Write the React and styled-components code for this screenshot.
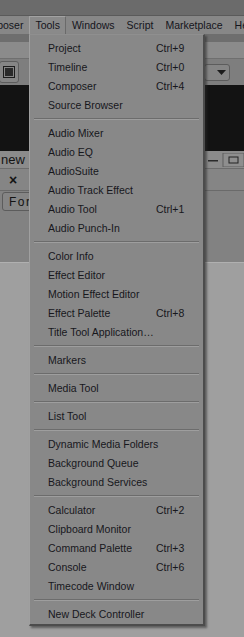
import React from 'react'
import styled, { createGlobalStyle } from 'styled-components'

const Global = createGlobalStyle`
  html, body { margin: 0; padding: 0; }
  body {
    width: 244px;
    height: 637px;
    overflow: hidden;
    background: #9f9f9f;
    font-family: "Liberation Sans", Arial, sans-serif;
  }
`

const Screen = styled.div`
  position: relative;
  width: 244px;
  height: 637px;
  overflow: hidden;
  display: flex;
  flex-direction: column;
  background: #9f9f9f;
`

const Band = styled.div`
  height: ${p => p.h}px;
  background: ${p => p.bg};
  border-bottom: ${p => (p.line ? `1px solid ${p.line}` : 'none')};
  box-sizing: border-box;
  flex-shrink: 0;
  display: flex;
  align-items: center;
  justify-content: space-between;
`

const MenuBar = styled.div`
  height: 18px;
  background: #878787;
  display: flex;
  align-items: stretch;
  margin-left: -31px;
  flex-shrink: 0;
`

const BarItem = styled.div`
  padding: 0 5px;
  font-size: 10.5px;
  line-height: 17px;
  color: #15151c;
  white-space: nowrap;
  box-sizing: border-box;
  border: 1px solid ${p => (p.open ? '#6a6a6a' : 'transparent')};
  border-top-color: ${p => (p.open ? '#a2a2a2' : 'transparent')};
  border-left-color: ${p => (p.open ? '#a2a2a2' : 'transparent')};
  border-bottom: none;
  background: ${p => (p.open ? '#8a8a8a' : 'transparent')};
`

const ToolButton = styled.div`
  width: ${p => p.w}px;
  height: ${p => p.h}px;
  margin: 0 ${p => p.mr || 0}px 0 ${p => p.ml || 0}px;
  box-sizing: border-box;
  border: 1px solid #5c5c5c;
  border-radius: 3px;
  background: #858585;
  display: flex;
  align-items: center;
  justify-content: center;
  color: #1c1c1c;
`

const Label = styled.span`
  font-size: ${p => p.size || 12}px;
  color: #141414;
  letter-spacing: ${p => p.ls || 0}px;
`

const Menu = styled.div`
  position: absolute;
  left: 29px;
  top: 34px;
  width: 176px;
  box-sizing: border-box;
  padding: 3px 0 1px;
  background: #888888;
  border-left: 1px solid #a0a0a0;
  border-top: 1px solid #8f8f8f;
  border-right: 2px solid #4c4c4c;
  border-bottom: 2px solid #4c4c4c;
  box-shadow: 2px 2px 2px rgba(40, 40, 40, 0.55);
`

const Item = styled.div`
  height: 19px;
  display: grid;
  grid-template-columns: 108px auto;
  align-items: center;
  padding-left: 18px;
  font-size: 10.5px;
  color: #17171c;
  white-space: nowrap;
`

const Separator = styled.div`
  height: 9px;
  display: flex;
  align-items: center;
  padding: 0 4px;
  &::after {
    content: '';
    flex: 1;
    height: 0;
    border-top: 1px solid #6c6c6c;
    border-bottom: 1px solid #9e9e9e;
  }
`

const groups = [
  [
    ['Project', 'Ctrl+9'],
    ['Timeline', 'Ctrl+0'],
    ['Composer', 'Ctrl+4'],
    ['Source Browser'],
  ],
  [
    ['Audio Mixer'],
    ['Audio EQ'],
    ['AudioSuite'],
    ['Audio Track Effect'],
    ['Audio Tool', 'Ctrl+1'],
    ['Audio Punch-In'],
  ],
  [
    ['Color Info'],
    ['Effect Editor'],
    ['Motion Effect Editor'],
    ['Effect Palette', 'Ctrl+8'],
    ['Title Tool Application\u2026'],
  ],
  [['Markers']],
  [['Media Tool']],
  [['List Tool']],
  [
    ['Dynamic Media Folders'],
    ['Background Queue'],
    ['Background Services'],
  ],
  [
    ['Calculator', 'Ctrl+2'],
    ['Clipboard Monitor'],
    ['Command Palette', 'Ctrl+3'],
    ['Console', 'Ctrl+6'],
    ['Timecode Window'],
  ],
  [['New Deck Controller']],
]

export default function App() {
  return (
    <Screen>
      <Global />
      <Band h={16} bg="#6b6b6b" line="#5a5a5a" />
      <MenuBar>
        <BarItem>Composer</BarItem>
        <BarItem open>Tools</BarItem>
        <BarItem>Windows</BarItem>
        <BarItem>Script</BarItem>
        <BarItem>Marketplace</BarItem>
        <BarItem>Help</BarItem>
      </MenuBar>
      <Band h={8} bg="#6e6e6e" />
      <Band h={17} bg="#8b8b8b" line="#6f6f6f" />
      <Band h={26} bg="#7e7e7e">
        <ToolButton w={20} h={22} ml={-1}>
          <svg width="12" height="12" viewBox="0 0 12 12">
            <rect x="0.5" y="0.5" width="11" height="11" fill="none" stroke="#1c1c1c" />
            <rect x="2" y="2" width="8" height="8" fill="#2a2a2a" />
          </svg>
        </ToolButton>
        <ToolButton w={26} h={17} mr={14}>
          <svg width="9" height="5" viewBox="0 0 9 5" style={{ marginLeft: 8 }}>
            <path d="M0 0 H9 L4.5 5 Z" fill="#1c1c1c" />
          </svg>
        </ToolButton>
      </Band>
      <Band h={66} bg="#131313" />
      <Band h={18} bg="#8b8b8b" line="#6c6c6c">
        <Label size={13} style={{ marginLeft: 1 }}>new</Label>
        <svg width="36" height="14" viewBox="0 0 36 14">
          <rect x="0" y="7" width="10" height="1.5" fill="#2a2a2a" />
          <rect x="15" y="0" width="21" height="14" fill="#8e8e8e" stroke="#5e5e5e" />
          <rect x="21" y="4" width="9" height="6" fill="none" stroke="#222" />
        </svg>
      </Band>
      <Band h={22} bg="#858585" line="#6a6a6a">
        <Label size={14} style={{ marginLeft: 9, fontWeight: 'bold' }}>{'\u00d7'}</Label>
      </Band>
      <Band h={28} bg="#828282">
        <ToolButton w={30} h={19} ml={2} style={{ alignSelf: 'flex-start', marginTop: 1, justifyContent: 'flex-start', paddingLeft: 6 }}>
          <Label size={12} ls={1.5}>Form</Label>
        </ToolButton>
      </Band>
      <Band h={44} bg="#828282" line="#b0b0b0" />
      <Menu>
        {groups.map((g, gi) => (
          <React.Fragment key={gi}>
            {gi > 0 && <Separator />}
            {g.map(([name, key]) => (
              <Item key={name}>
                <span>{name}</span>
                <span>{key || ''}</span>
              </Item>
            ))}
          </React.Fragment>
        ))}
      </Menu>
    </Screen>
  )
}
